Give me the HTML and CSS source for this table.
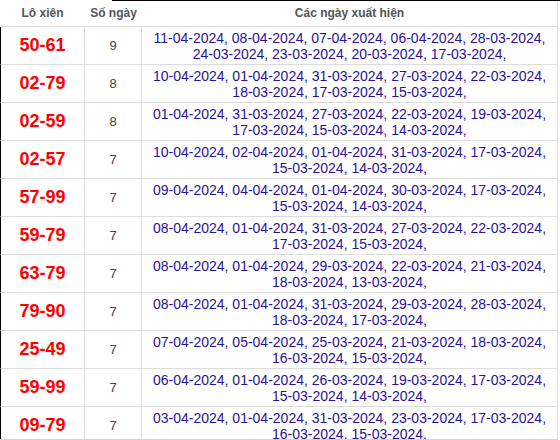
FILE: index.html
```html
<!DOCTYPE html>
<html>
    <head>
        <meta charset="UTF-8">
        <title>Lô xiên</title>
        <link rel="stylesheet" href="styles.css">
    </head>
    <body>
        <div class="table-wrap">
            <table class="lx-table">
                <colgroup>
                    <col class="col-pair">
                    <col class="col-count">
                    <col class="col-dates">
                </colgroup>
                <thead>
                    <tr>
                        <th>Lô xiên</th>
                        <th>Số ngày</th>
                        <th>Các ngày xuất hiện</th>
                    </tr>
                </thead>
                <tbody>
                    <tr>
                        <td class="pair">50-61</td>
                        <td class="count">9</td>
                        <td class="dates">11-04-2024, 08-04-2024, 07-04-2024, 06-04-2024, 28-03-2024,<br>24-03-2024, 23-03-2024, 20-03-2024, 17-03-2024,</td>
                    </tr>
                    <tr>
                        <td class="pair">02-79</td>
                        <td class="count">8</td>
                        <td class="dates">10-04-2024, 01-04-2024, 31-03-2024, 27-03-2024, 22-03-2024,<br>18-03-2024, 17-03-2024, 15-03-2024,</td>
                    </tr>
                    <tr>
                        <td class="pair">02-59</td>
                        <td class="count">8</td>
                        <td class="dates">01-04-2024, 31-03-2024, 27-03-2024, 22-03-2024, 19-03-2024,<br>17-03-2024, 15-03-2024, 14-03-2024,</td>
                    </tr>
                    <tr>
                        <td class="pair">02-57</td>
                        <td class="count">7</td>
                        <td class="dates">10-04-2024, 02-04-2024, 01-04-2024, 31-03-2024, 17-03-2024,<br>15-03-2024, 14-03-2024,</td>
                    </tr>
                    <tr>
                        <td class="pair">57-99</td>
                        <td class="count">7</td>
                        <td class="dates">09-04-2024, 04-04-2024, 01-04-2024, 30-03-2024, 17-03-2024,<br>15-03-2024, 14-03-2024,</td>
                    </tr>
                    <tr>
                        <td class="pair">59-79</td>
                        <td class="count">7</td>
                        <td class="dates">08-04-2024, 01-04-2024, 31-03-2024, 27-03-2024, 22-03-2024,<br>17-03-2024, 15-03-2024,</td>
                    </tr>
                    <tr>
                        <td class="pair">63-79</td>
                        <td class="count">7</td>
                        <td class="dates">08-04-2024, 01-04-2024, 29-03-2024, 22-03-2024, 21-03-2024,<br>18-03-2024, 13-03-2024,</td>
                    </tr>
                    <tr>
                        <td class="pair">79-90</td>
                        <td class="count">7</td>
                        <td class="dates">08-04-2024, 01-04-2024, 31-03-2024, 29-03-2024, 28-03-2024,<br>18-03-2024, 17-03-2024,</td>
                    </tr>
                    <tr>
                        <td class="pair">25-49</td>
                        <td class="count">7</td>
                        <td class="dates">07-04-2024, 05-04-2024, 25-03-2024, 21-03-2024, 18-03-2024,<br>16-03-2024, 15-03-2024,</td>
                    </tr>
                    <tr>
                        <td class="pair">59-99</td>
                        <td class="count">7</td>
                        <td class="dates">06-04-2024, 01-04-2024, 26-03-2024, 19-03-2024, 17-03-2024,<br>15-03-2024, 14-03-2024,</td>
                    </tr>
                    <tr>
                        <td class="pair">09-79</td>
                        <td class="count">7</td>
                        <td class="dates">03-04-2024, 01-04-2024, 31-03-2024, 23-03-2024, 17-03-2024,<br>16-03-2024, 15-03-2024,</td>
                    </tr>
                </tbody>
            </table>
        </div>
    </body>
</html>
```

FILE: styles.css
```css
html, body {
    margin: 0;
    padding: 0;
    background: #fff;
    font-family: "Liberation Sans", Arial, sans-serif;
}
body {
    position: relative;
}
body::before {
    content: "";
    position: absolute;
    top: 0; left: 112px; right: 0;
    height: 1px;
    background: #000;
}
.table-wrap {
    width: 558px;
    height: 439px;
    overflow: hidden;
    border-bottom: 1px solid #d4d4d4;
}
.lx-table {
    width: 558px;
    table-layout: fixed;
    border-collapse: separate;
    border-spacing: 0;
}
.col-pair { width: 85px; }
.col-count { width: 57px; }
.col-dates { width: 416px; }

.lx-table th {
    height: 27px;
    box-sizing: border-box;
    padding: 0;
    font-size: 12px;
    font-weight: bold;
    color: #555;
    text-align: center;
    vertical-align: middle;
    border-bottom: 1px solid #ddd;
}
.lx-table th:last-child {
    border-right: 1px solid #ddd;
}
.lx-table td {
    height: 38px;
    box-sizing: border-box;
    padding: 0;
    text-align: center;
    vertical-align: middle;
    border-right: 1px solid #ddd;
    border-bottom: 1px solid #ddd;
}
.lx-table td:first-child {
    border-left: 1px solid #000;
}
.pair {
    font-size: 18px;
    font-weight: bold;
    color: #f00;
}
.count {
    font-size: 13px;
    color: #444;
}
.dates {
    font-size: 14px;
    line-height: 16px;
    color: #2a1199;
}
```
